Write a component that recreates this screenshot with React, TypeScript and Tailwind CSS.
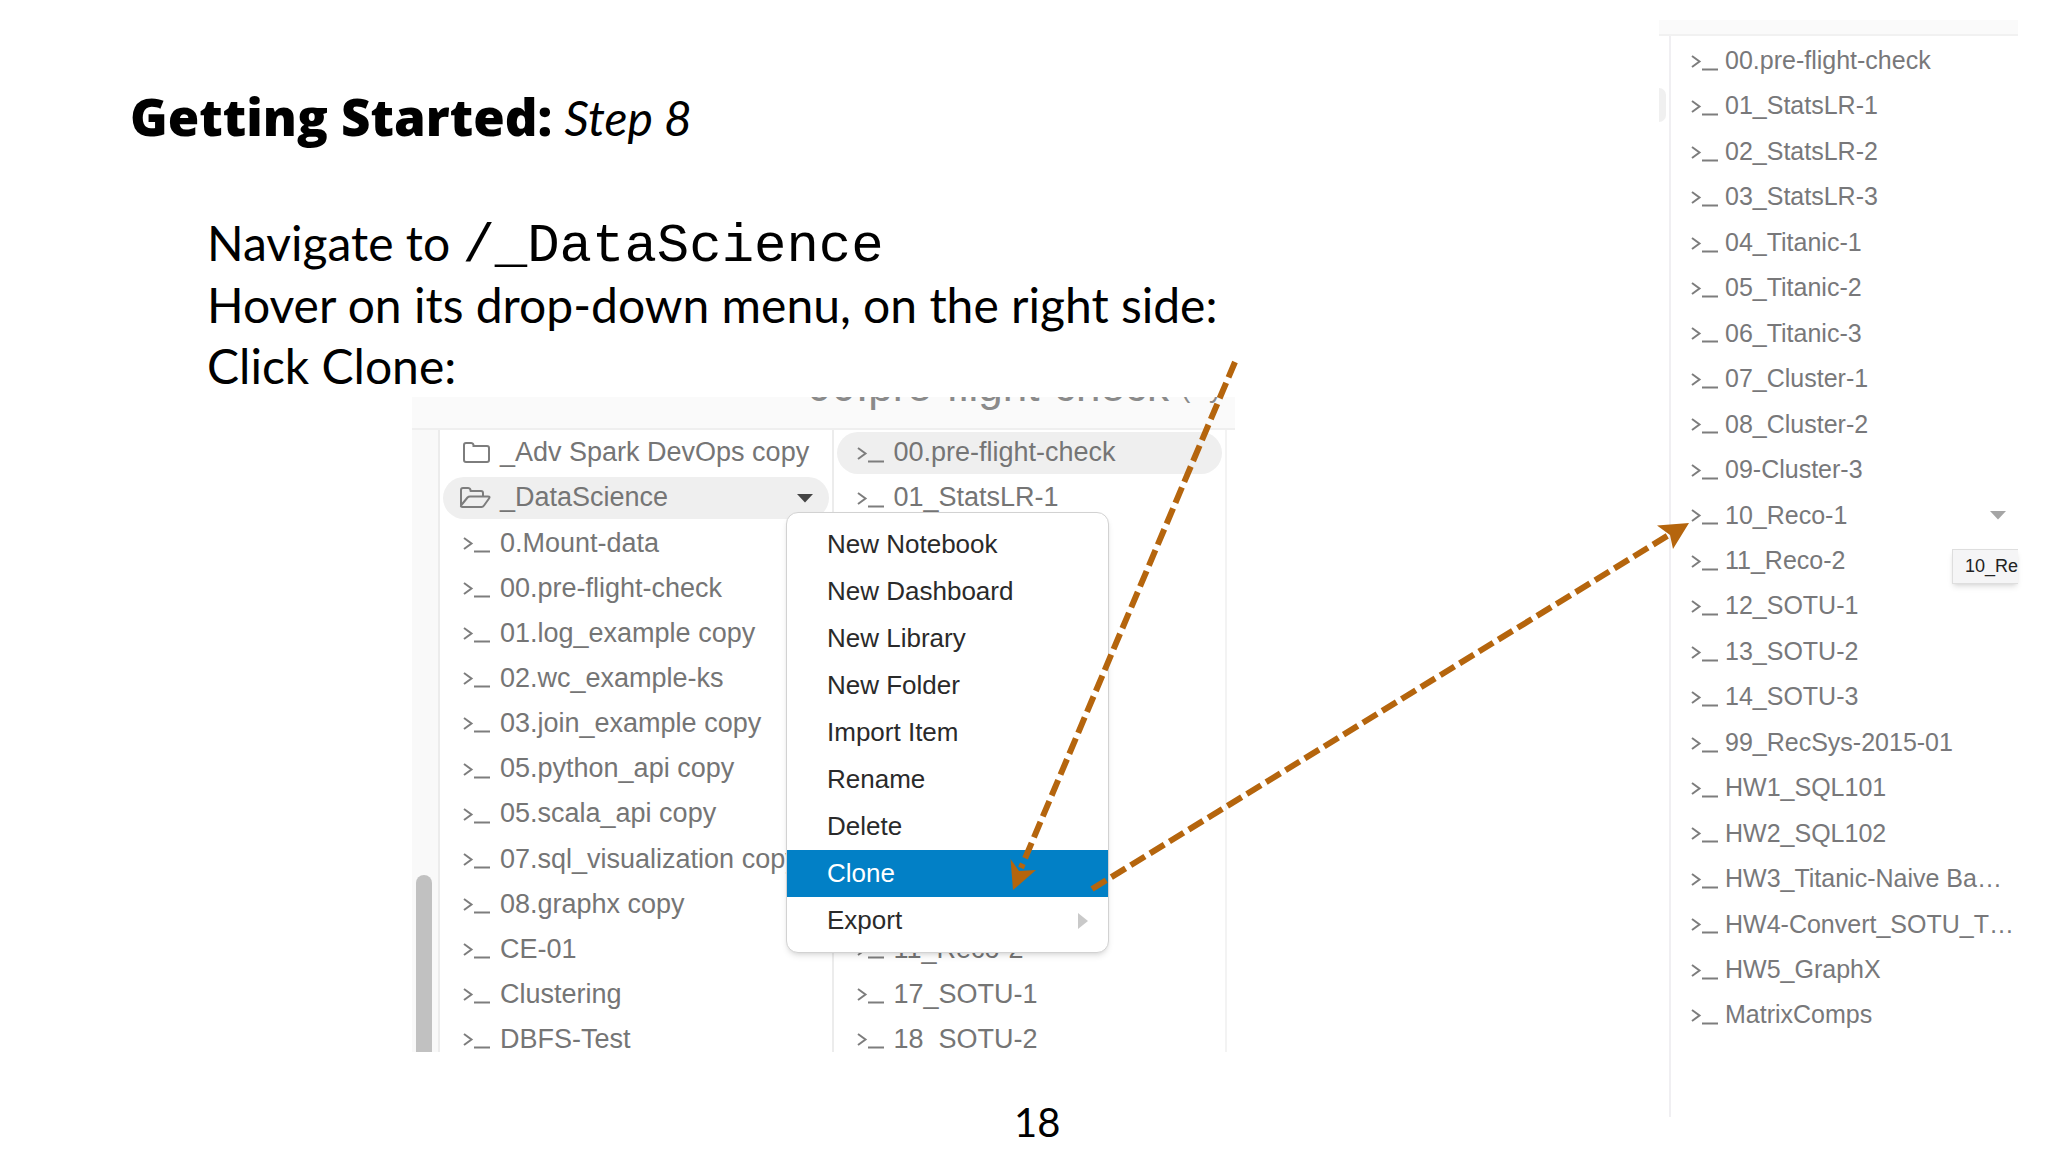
import clsx from 'clsx';

type IconName = 'folder' | 'folder-open' | 'notebook';

interface Item {
  name: string;
  icon?: IconName;
  active?: boolean;
  caret?: boolean;
}

const workspaceItems: Item[] = [
  { name: '_Adv Spark DevOps copy', icon: 'folder' },
  { name: '_DataScience', icon: 'folder-open', active: true, caret: true },
  { name: '0.Mount-data' },
  { name: '00.pre-flight-check' },
  { name: '01.log_example copy' },
  { name: '02.wc_example-ks' },
  { name: '03.join_example copy' },
  { name: '05.python_api copy' },
  { name: '05.scala_api copy' },
  { name: '07.sql_visualization copy' },
  { name: '08.graphx copy' },
  { name: 'CE-01' },
  { name: 'Clustering' },
  { name: 'DBFS-Test' },
];

const folderItems: Item[] = [
  { name: '00.pre-flight-check', active: true },
  { name: '01_StatsLR-1' },
  { name: '02_StatsLR-2' },
  { name: '03_StatsLR-3' },
  { name: '04_Titanic-1' },
  { name: '05_Titanic-2' },
  { name: '06_Titanic-3' },
  { name: '07_Cluster-1' },
  { name: '08_Cluster-2' },
  { name: '09-Cluster-3' },
  { name: '10_Reco-1' },
  { name: '11_Reco-2' },
  { name: '17_SOTU-1' },
  { name: '18_SOTU-2' },
];

const clonedItems: Item[] = [
  { name: '00.pre-flight-check' },
  { name: '01_StatsLR-1' },
  { name: '02_StatsLR-2' },
  { name: '03_StatsLR-3' },
  { name: '04_Titanic-1' },
  { name: '05_Titanic-2' },
  { name: '06_Titanic-3' },
  { name: '07_Cluster-1' },
  { name: '08_Cluster-2' },
  { name: '09-Cluster-3' },
  { name: '10_Reco-1', caret: true },
  { name: '11_Reco-2' },
  { name: '12_SOTU-1' },
  { name: '13_SOTU-2' },
  { name: '14_SOTU-3' },
  { name: '99_RecSys-2015-01' },
  { name: 'HW1_SQL101' },
  { name: 'HW2_SQL102' },
  { name: 'HW3_Titanic-Naive Ba…' },
  { name: 'HW4-Convert_SOTU_T…' },
  { name: 'HW5_GraphX' },
  { name: 'MatrixComps' },
];

const menuItems = [
  'New Notebook',
  'New Dashboard',
  'New Library',
  'New Folder',
  'Import Item',
  'Rename',
  'Delete',
  'Clone',
  'Export',
];

const ItemIcon = ({ name }: { name: IconName }) => {
  if (name === 'folder') {
    return (
      <svg viewBox="0 0 32 24" className="h-6 w-8 shrink-0" fill="none" stroke="#7d7d7d" strokeWidth="2">
        <path d="M5 19V4Q5 2 7 2H12Q14 2 14.500 4V5H28Q30 5 30 7V19Q30 21 28 21H7Q5 21 5 19Z" />
      </svg>
    );
  }
  if (name === 'folder-open') {
    return (
      <svg viewBox="0 0 32 24" className="h-6 w-8 shrink-0" fill="none" stroke="#7d7d7d" strokeWidth="2" strokeLinejoin="round">
        <path d="M2 19V4Q2 2 4 2H9Q11 2 11.500 4V5H22Q24 5 24 7V10.500" />
        <path d="M2 19.500L8.500 11.500Q9.500 10.500 11 10.500H29Q31.500 10.500 30 12.500L25 19.500Q24 21 22.500 21H3.500Q1.500 21 2 19.500Z" />
      </svg>
    );
  }
  return (
    <svg viewBox="0 0 32 24" className="h-6 w-8 shrink-0" fill="none" stroke="#7d7d7d" strokeWidth="2">
      <path d="M5 7L12.500 12.500L5 18" />
      <path d="M15 20.500H31" />
    </svg>
  );
};

const Caret = ({ className }: { className: string }) => (
  <svg viewBox="0 0 16 10" className={clsx('h-[10px] w-4 shrink-0', className)} fill="currentColor">
    <path d="M0 1H16L8 9.500Z" />
  </svg>
);

const WorkspaceColumn = ({ items }: { items: Item[] }) => (
  <ul className="flex h-[632px] min-w-0 flex-1 flex-col border-l-2 border-[#ececec] px-[3px] text-[27px] text-[#757575]">
    {items.map((item) => (
      <li key={item.name} className="flex flex-1 items-center">
        <a
          href="#"
          className={clsx(
            'flex h-[42px] w-full items-center gap-[9px] whitespace-nowrap rounded-full pl-4 pr-3',
            item.active && 'bg-[#efefef]'
          )}
        >
          <ItemIcon name={item.icon ?? 'notebook'} />
          <span className="flex-1">{item.name}</span>
          {item.caret && <Caret className="mr-1 text-[#444444]" />}
        </a>
      </li>
    ))}
  </ul>
);

const ContextMenu = () => (
  <div
    role="menu"
    className="absolute left-[374px] top-[115px] w-[323px] rounded-xl border border-[#d2d2d2] bg-white py-2 text-[26px] text-[#2a2a2a] shadow-md"
  >
    {menuItems.map((label) => (
      <button
        key={label}
        role="menuitem"
        className={clsx(
          'flex h-[47px] w-full items-center justify-between pl-10 pr-5',
          label === 'Clone' && 'bg-[#0280c6] text-white'
        )}
      >
        {label}
        {label === 'Export' && (
          <svg viewBox="0 0 10 16" className="h-4 w-[10px]" fill="#c9c9c9">
            <path d="M0 0L10 8L0 16Z" />
          </svg>
        )}
      </button>
    ))}
  </div>
);

const WorkspaceBrowser = () => (
  <div className="relative ml-[412px] h-[655px] w-[823px] font-['Liberation_Sans',Arial,sans-serif]">
    <div className="flex h-full flex-col overflow-hidden">
      <div className="flex h-[33px] shrink-0 items-end gap-3 overflow-hidden whitespace-nowrap border-b-2 border-[#efefef] bg-[#fafafa] pb-[17px] pl-[395px] text-[#8a8a8a]">
        <span className="text-[44px] leading-[50px]">00.pre-flight-check</span>
        <span className="text-[28px] leading-[46px]">(Python)</span>
      </div>
      <div className="flex min-h-0 flex-1 items-start">
        <div className="flex h-full w-[26px] flex-col justify-end bg-[#f9f9f9] pl-1">
          <div className="h-[177px] w-4 rounded-t-full bg-[#c1c1c1]" />
        </div>
        <WorkspaceColumn items={workspaceItems} />
        <WorkspaceColumn items={folderItems} />
        <div className="h-full w-[10px] border-l-2 border-[#f3f3f3]" />
      </div>
    </div>
    <ContextMenu />
  </div>
);

const ClonedFolder = () => (
  <aside className="relative mr-[30px] mt-5 w-[359px] font-['Liberation_Sans',Arial,sans-serif]">
    <div className="h-4 border-b-2 border-[#f1f1f1] bg-[#fafafa]" />
    <div className="flex h-[1081px]">
      <div className="w-[10px] pt-[52px]">
        <div className="h-[34px] w-[7px] rounded-r-full bg-[#f0f0f0]" />
      </div>
      <ul className="flex flex-1 flex-col border-l-2 border-[#f0eff2] pb-[79px] pl-4 pt-[2px] text-[25px] text-[#78787a]">
        {clonedItems.map((item) => (
          <li key={item.name} className="flex-1">
            <a href="#" className="flex h-full items-center gap-[6px] whitespace-nowrap">
              <ItemIcon name="notebook" />
              <span className="flex-1">{item.name}</span>
              {item.caret && <Caret className="mr-3 text-[#a5a5a5]" />}
            </a>
          </li>
        ))}
      </ul>
    </div>
    <div className="absolute right-0 top-[529px] flex h-[35px] w-[66px] items-center overflow-hidden border border-r-0 border-[#dedede] bg-[#f5f5f6] pl-3 shadow-md">
      <span className="whitespace-nowrap text-[18px] text-[#222222]">10_Reco-1</span>
    </div>
  </aside>
);

const Arrows = () => (
  <svg viewBox="0 0 2048 1152" className="pointer-events-none absolute left-0 top-0 w-full" fill="#b5650d">
    <g stroke="#b5650d" strokeWidth="6" strokeDasharray="16.700 6">
      <path d="M1235 362L1021 868" />
      <path d="M1092 889L1668 535.500" />
    </g>
    <path d="M1013 890L1010.500 859L1019 871L1036 870Z" />
    <path d="M1689 523L1673 549L1670 535L1657 525.500Z" />
  </svg>
);

export default function App() {
  return (
    <div className="relative flex min-h-screen items-start overflow-hidden bg-white font-['Lato',sans-serif] text-black">
      <main className="flex flex-1 flex-col">
        <h1 className="pl-[130px] pt-[87px] text-[48px] leading-[62px]">
          <span className="font-['Open_Sans',sans-serif] text-[51px] font-extrabold leading-none">Getting Started:</span>{' '}
          <em>Step 8</em>
        </h1>
        <div className="pb-px pl-[207px] pt-[63px] text-[48px] leading-[61px]">
          <p>
            Navigate to <code className="font-['Liberation_Mono',monospace] text-[54px] leading-none">/_DataScience</code>
          </p>
          <p>Hover on its drop-down menu, on the right side:</p>
          <p>Click Clone:</p>
        </div>
        <WorkspaceBrowser />
        <footer className="pl-[1014px] pt-[46px] text-[40px] leading-[48px]">18</footer>
      </main>
      <ClonedFolder />
      <Arrows />
    </div>
  );
}
